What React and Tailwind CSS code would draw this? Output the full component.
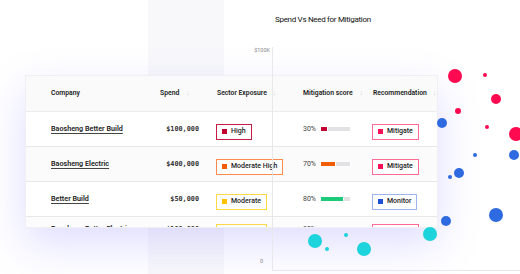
import React from "react";

const tones = {
  high: { box: "border-[#c81e45]", dot: "bg-[#c3002f]" },
  modHigh: { box: "border-[#ff8a4c]", dot: "bg-[#f25c05]" },
  moderate: { box: "border-[#ffd84a]", dot: "bg-[#ffc107]" },
  mitigate: { box: "border-[#ff6b95]", dot: "bg-[#ff0f55]" },
  monitor: { box: "border-[#9db4ee]", dot: "bg-[#1d4ed8]" },
};

const rows = [
  { company: "Baosheng Better Build", spend: "$100,000", sector: "High", sectorTone: "high", score: "30%", fill: "w-[7px] bg-[#c3002f]", rec: "Mitigate", recTone: "mitigate" },
  { company: "Baosheng Electric", spend: "$400,000", sector: "Moderate High", sectorTone: "modHigh", score: "70%", fill: "w-[15px] bg-[#f25c05]", rec: "Mitigate", recTone: "mitigate", bg: "bg-[#fbfbfb]" },
  { company: "Better Build", spend: "$50,000", sector: "Moderate", sectorTone: "moderate", score: "80%", fill: "w-[23px] bg-[#1ccb7a]", rec: "Monitor", recTone: "monitor" },
  { company: "Baosheng Better Electric", spend: "$100,000", sector: "Moderate", sectorTone: "moderate", score: "80%", fill: "w-[23px] bg-[#8fe5c0]", rec: "Mitigate", recTone: "mitigate", late: true },
];

// page coordinates of the scatter points
const bubbles = [
  { x: 455, y: 76, r: 7, c: "#ff0a50" },
  { x: 485, y: 75, r: 2, c: "#ff0a50" },
  { x: 496, y: 99, r: 4.7, c: "#ff0a50" },
  { x: 458, y: 111, r: 2.7, c: "#ff0a50" },
  { x: 487, y: 127, r: 2, c: "#ff0a50" },
  { x: 516, y: 134, r: 7, c: "#ff0a50" },
  { x: 442, y: 123, r: 4.7, c: "#2f6be0" },
  { x: 475, y: 155, r: 2, c: "#2f6be0" },
  { x: 514, y: 155, r: 4.7, c: "#2f6be0" },
  { x: 459, y: 173, r: 4.7, c: "#2f6be0" },
  { x: 450, y: 177, r: 1.7, c: "#2f6be0" },
  { x: 496, y: 215, r: 7, c: "#2f6be0" },
  { x: 446, y: 221, r: 4.7, c: "#2f6be0" },
  { x: 430, y: 234, r: 7, c: "#1dd3dc" },
  { x: 315, y: 241, r: 7, c: "#1dd3dc" },
  { x: 346, y: 235, r: 2, c: "#1dd3dc" },
  { x: 327, y: 249, r: 2, c: "#1dd3dc" },
  { x: 364, y: 249, r: 7, c: "#1dd3dc" },
];

const Badge = ({ tone, children }) => (
  <span className={`inline-flex items-center gap-[4px] h-[16px] px-[5px] border bg-white whitespace-nowrap ${tones[tone].box}`}>
    <span className={`w-[5px] h-[5px] shrink-0 ${tones[tone].dot}`} />
    <span className="text-[7px] font-medium text-[#222]">{children}</span>
  </span>
);

const Head = ({ label, arrowGap }) => (
  <div className="flex items-center whitespace-nowrap text-[6.8px] font-semibold text-[#222]">
    {label}
    {arrowGap && <span className={`text-[7px] text-[#d4d4d8] font-normal ${arrowGap}`}>↓</span>}
  </div>
);

const App = () => {
  return (
    <div className="relative w-[520px] h-[274px] overflow-hidden bg-white grid font-['Roboto',sans-serif]">
      <div className="col-start-1 row-start-1 ml-[148px] w-[76px] h-full bg-[#f8f8fa]" />

      <div className="col-start-1 row-start-1 ml-[252px] flex flex-col h-[274px]">
        <div className="h-[47px] pt-[14px] pl-[23px] text-[8px] tracking-[-0.3px] text-[#111]">
          Spend Vs Need for Mitigation
        </div>
        <div className="flex flex-1 mb-[3px]">
          <div className="w-[20px] flex flex-col justify-between items-end pr-[2px] pb-[6px] text-[5.5px] text-[#8a8a8a]">
            <span className="-mt-[1px]">$100K</span>
            <span className="pr-[7px]">0</span>
          </div>
          <div className="relative flex-1 border-l border-b border-[#e8e8ec]">
            {bubbles.map((b, i) => (
              <span
                key={i}
                className="absolute rounded-full"
                style={{ left: b.x - 273 - b.r, top: b.y - 47 - b.r, width: b.r * 2, height: b.r * 2, background: b.c }}
              />
            ))}
          </div>
        </div>
      </div>

      <div className="col-start-1 row-start-1 pt-[75px] pl-[25px] self-start">
        <div className="w-[413px] h-[153px] overflow-hidden bg-white border border-[#efeff4] shadow-[0_16px_40px_rgba(110,100,255,0.22)]">
          <div className="h-[36px] grid grid-cols-[109px_57px_86px_70px_1fr] items-center pl-[25px] bg-[#fafafa] border-b border-[#ececee]">
            <Head label="Company" />
            <Head label="Spend" arrowGap="ml-[7px]" />
            <Head label="Sector Exposure" arrowGap="ml-[6px]" />
            <Head label="Mitigation score" arrowGap="ml-[7px]" />
            <Head label="Recommendation" arrowGap="ml-[6px]" />
          </div>
          {rows.map((row) => (
            <div
              key={row.company}
              className={`h-[35px] grid grid-cols-[109px_57px_86px_70px_1fr] items-center pl-[25px] border-b border-[#e8e8ea] ${row.late ? "pb-[11px] bg-[#fcfcfc]" : ""} ${row.bg || ""}`}
            >
              <span className="whitespace-nowrap text-[7.2px] font-semibold text-[#222] underline underline-offset-[2px] decoration-[#444]">
                {row.company}
              </span>
              <span className="pr-[18px] text-right font-['DejaVu_Sans_Mono',monospace] text-[6.8px] font-semibold text-[#333]">
                {row.spend}
              </span>
              <div className="-ml-[1px]">
                <Badge tone={row.sectorTone}>{row.sector}</Badge>
              </div>
              <div className="flex items-center gap-[6px]">
                <span className="w-[12px] text-[7px] text-[#444]">{row.score}</span>
                <span className="flex w-[29px] h-[4px] bg-[#e2e2e4]">
                  <span className={`h-full border-r border-white ${row.fill}`} />
                </span>
              </div>
              <div className="-ml-[1px]">
                <Badge tone={row.recTone}>{row.rec}</Badge>
              </div>
            </div>
          ))}
        </div>
      </div>
    </div>
  );
};

export default App;
